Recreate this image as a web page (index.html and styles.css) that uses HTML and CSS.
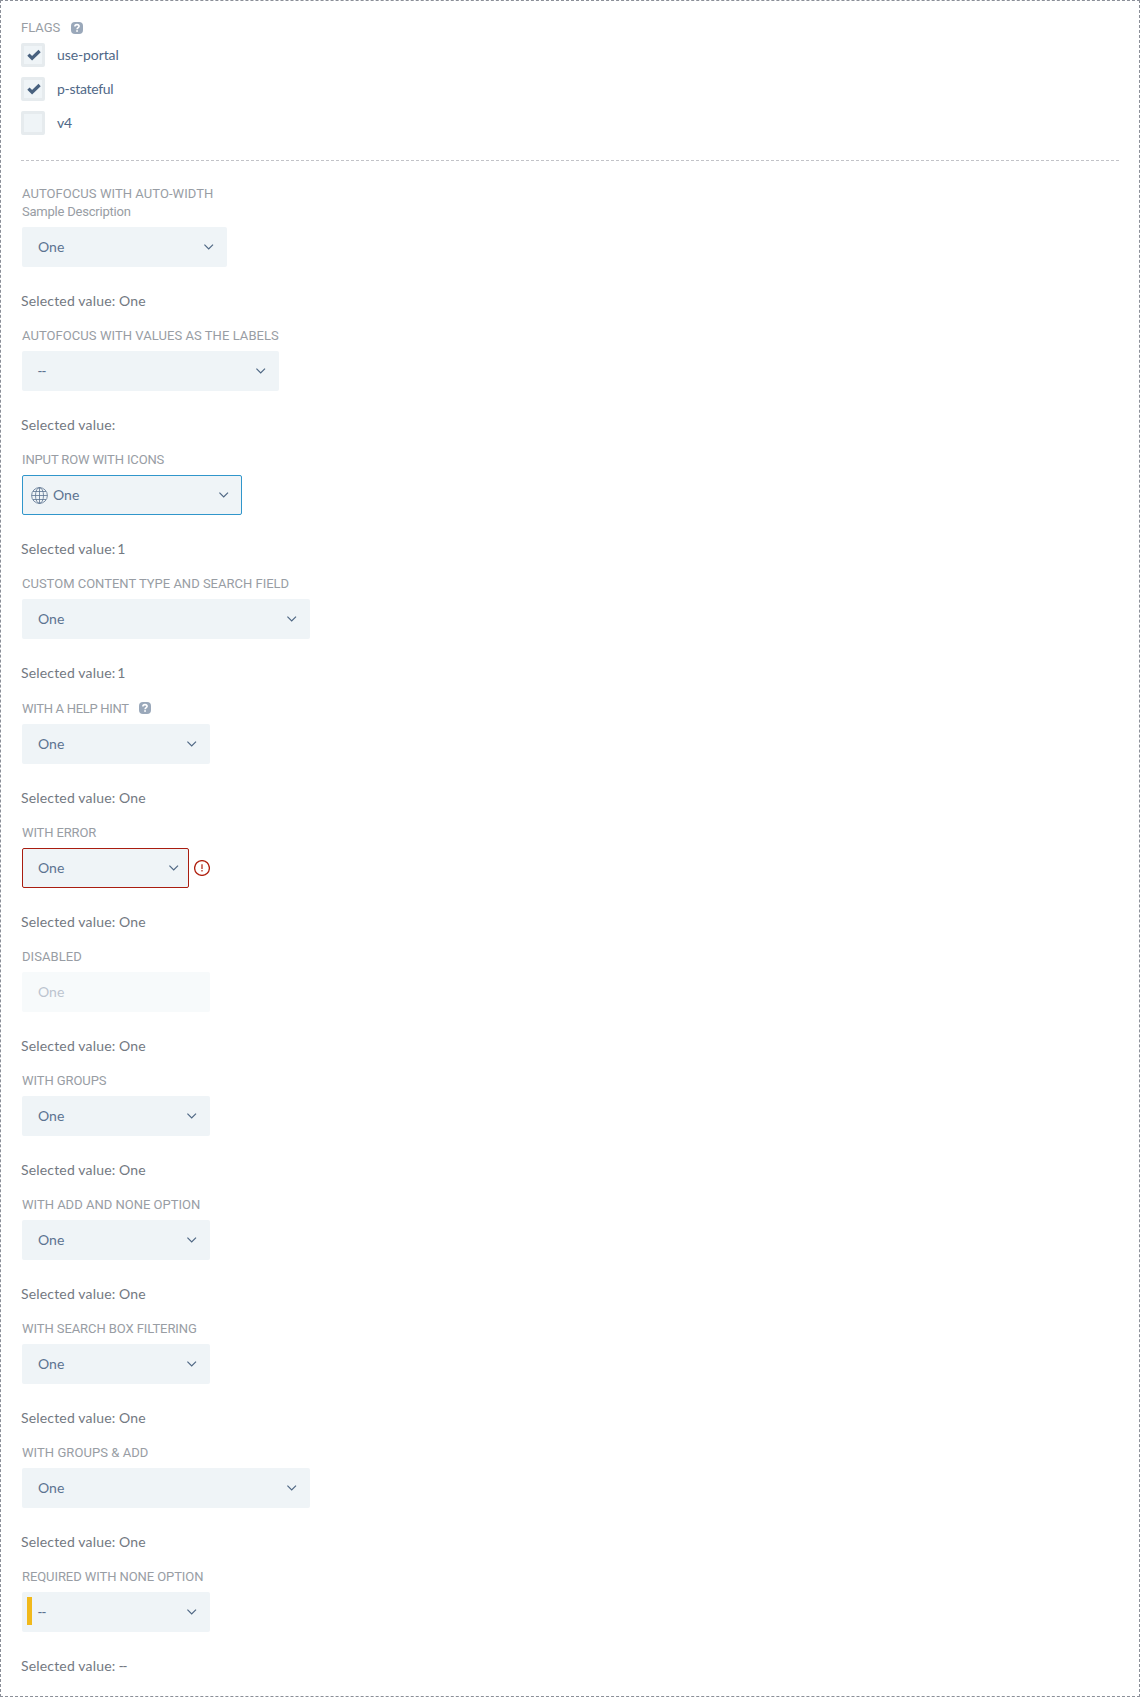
FILE: index.html
```html
<!DOCTYPE html>
<html lang="en">
<head>
<meta charset="utf-8">
<title>Select examples</title>
<link rel="stylesheet" href="styles.css">
</head>
<body>
<svg class="defs" width="0" height="0" aria-hidden="true">
  <symbol id="chevron" viewBox="0 0 10 6"><path d="M.4.6 4.7 5 9 .6" fill="none" stroke="currentColor" stroke-width="1.2"/></symbol>
  <symbol id="check" viewBox="0 0 14 12"><path d="M1.4 5.6 5.1 9.2 12.6 2" fill="none" stroke="currentColor" stroke-width="3.2"/></symbol>
  <symbol id="help" viewBox="0 0 12 12"><rect width="12" height="12" rx="4" fill="#9aa8ba"/><path d="M3.9 4.5C3.9 3.1 4.8 2.6 6 2.6s2.1.6 2.1 1.7C8.1 5.6 6.1 5.6 6.1 7.2" fill="none" stroke="#fff" stroke-width="1.6"/><rect x="5.2" y="8.2" width="1.7" height="1.6" fill="#fff"/></symbol>
  <symbol id="globe" viewBox="0 0 17 17"><g fill="none" stroke="currentColor" stroke-width=".8"><circle cx="8.5" cy="8.5" r="7.9"/><ellipse cx="8.5" cy="8.5" rx="4" ry="7.9"/><path d="M8.5.6v15.8M.6 8.5h15.8M2 4.5h13M2 12.5h13"/></g></symbol>
  <symbol id="alert" viewBox="0 0 16 16"><circle cx="8" cy="8" r="7.4" fill="none" stroke="currentColor" stroke-width="1.3"/><path d="M8 4.3v4.6M8 10v1.4" stroke="currentColor" stroke-width="1.2"/></symbol>
</svg>
<main class="demo">
  <section class="flags">
    <div class="flags-title">FLAGS <svg class="help"><use href="#help"/></svg></div>
    <label class="flag"><span class="box"><svg class="check"><use href="#check"/></svg></span><span class="flag-name">use-portal</span></label>
    <label class="flag"><span class="box"><svg class="check"><use href="#check"/></svg></span><span class="flag-name snug">p-stateful</span></label>
    <label class="flag"><span class="box"></span><span class="flag-name snug">v4</span></label>
  </section>
  <hr class="divider">

  <section class="field">
    <div class="label wide">AUTOFOCUS WITH AUTO-WIDTH</div>
    <div class="label description">Sample Description</div>
    <div class="select w-auto"><span>One</span><svg class="chevron"><use href="#chevron"/></svg></div>
    <p class="value">Selected value: One</p>
  </section>
  <section class="field">
    <div class="label wide">AUTOFOCUS WITH VALUES AS THE LABELS</div>
    <div class="select w-values"><span class="none">--</span><svg class="chevron"><use href="#chevron"/></svg></div>
    <p class="value">Selected value:</p>
  </section>
  <section class="field">
    <div class="label narrow">INPUT ROW WITH ICONS</div>
    <div class="select focused w-icons"><svg class="globe"><use href="#globe"/></svg><span>One</span><svg class="chevron"><use href="#chevron"/></svg></div>
    <p class="value">Selected value: <span class="digit">1</span></p>
  </section>
  <section class="field">
    <div class="label">CUSTOM CONTENT TYPE AND SEARCH FIELD</div>
    <div class="select w-large"><span>One</span><svg class="chevron"><use href="#chevron"/></svg></div>
    <p class="value">Selected value: <span class="digit">1</span></p>
  </section>
  <section class="field">
    <div class="label with-help"><span class="tight">WITH A HELP HINT</span><svg class="help"><use href="#help"/></svg></div>
    <div class="select"><span>One</span><svg class="chevron"><use href="#chevron"/></svg></div>
    <p class="value">Selected value: One</p>
  </section>
  <section class="field">
    <div class="label narrow">WITH ERROR</div>
    <div class="row"><div class="select invalid w-error"><span>One</span><svg class="chevron"><use href="#chevron"/></svg></div><svg class="alert"><use href="#alert"/></svg></div>
    <p class="value">Selected value: One</p>
  </section>
  <section class="field">
    <div class="label wide">DISABLED</div>
    <div class="select disabled"><span>One</span></div>
    <p class="value">Selected value: One</p>
  </section>
  <section class="field">
    <div class="label slim">WITH GROUPS</div>
    <div class="select"><span>One</span><svg class="chevron"><use href="#chevron"/></svg></div>
    <p class="value">Selected value: One</p>
  </section>
  <section class="field">
    <div class="label">WITH ADD AND NONE OPTION</div>
    <div class="select"><span>One</span><svg class="chevron"><use href="#chevron"/></svg></div>
    <p class="value">Selected value: One</p>
  </section>
  <section class="field">
    <div class="label slim">WITH SEARCH BOX FILTERING</div>
    <div class="select"><span>One</span><svg class="chevron"><use href="#chevron"/></svg></div>
    <p class="value">Selected value: One</p>
  </section>
  <section class="field">
    <div class="label wide">WITH GROUPS &amp; ADD</div>
    <div class="select w-large"><span>One</span><svg class="chevron"><use href="#chevron"/></svg></div>
    <p class="value">Selected value: One</p>
  </section>
  <section class="field">
    <div class="label slim">REQUIRED WITH NONE OPTION</div>
    <div class="select required"><span class="none">--</span><svg class="chevron"><use href="#chevron"/></svg></div>
    <p class="value">Selected value: <span class="none">--</span></p>
  </section>
</main>
</body>
</html>
```
FILE: styles.css
```css
* { box-sizing: border-box; }
body { margin: 0; background: #fff; color: #737982; font: 14px/20px Lato, "Open Sans", sans-serif; }
.defs { position: absolute; }
svg { display: block; flex: none; }

.demo { border: 1px dashed #8b8f98; padding: 17px 20px 20px; height: 1697px; }

.flags-title { display: flex; align-items: center; gap: 11px; height: 19px; padding-top: 1px; margin-bottom: 6px; color: #989da4; font: 13px/18px Roboto, sans-serif; }
.flags-title .help { margin-bottom: 1px; }
.help { width: 12px; height: 12px; }
.flag { display: flex; align-items: center; gap: 12px; height: 24px; margin-bottom: 10px; color: #4f6887; }
.flag-name { letter-spacing: -.1px; }
.flag-name.snug { letter-spacing: -.3px; }
.box { display: flex; align-items: center; justify-content: center; width: 24px; height: 24px; border: 3px solid #e6ebee; border-radius: 2px; background: #eff4f7; }
.check { width: 14px; height: 12px; margin: 0 0 1px 1px; color: #48617f; }
.divider { height: 0; margin: 25px 0 0; border: 0; border-top: 1px dashed #c2c3c8; }

.field { padding-left: 1px; margin-bottom: 16px; }
.divider + .field { margin-top: 24px; }
.label { height: 18px; color: #989da4; font: 13px/18px Roboto, sans-serif; white-space: nowrap; }
.wide { letter-spacing: .06px; }
.slim { letter-spacing: -.08px; }
.narrow { letter-spacing: -.14px; }
.tight { letter-spacing: -.31px; }
.description { letter-spacing: -.22px; }
.with-help { display: flex; align-items: flex-end; gap: 10px; height: 19px; }
.with-help .help { margin-bottom: 4px; }

.select { position: relative; display: flex; align-items: center; width: 188px; height: 40px; margin-top: 6px; padding: 0 13px 0 16px; border-radius: 2px; background: #eff4f7; color: #5c7391; }
.w-auto { width: 205px; }
.w-values { width: 257px; }
.w-icons { width: 220px; }
.w-large { width: 288px; }
.w-error { width: 167px; }
.chevron { width: 10px; height: 6px; margin-left: auto; color: #4f6784; }
.none { font-family: Roboto, sans-serif; letter-spacing: .1px; }
.digit { margin-left: -2px; }
.focused { border: 1px solid #3096cb; padding: 0 12px 0 8px; gap: 5px; }
.globe { width: 17px; height: 17px; }
.invalid { border: 1px solid #a91d10; padding: 0 9px 0 15px; }
.row { display: flex; align-items: center; gap: 5px; margin-top: 6px; }
.row .select { margin-top: 0; }
.alert { width: 16px; height: 16px; color: #b0200f; }
.disabled { background: #f7fafb; color: #bcc4cf; }
.required::before { content: ""; position: absolute; left: 5px; top: 5px; width: 5px; height: 28px; background: #f1b91c; }
.value { margin: 24px 0 0 -1px; letter-spacing: .17px; }
```
